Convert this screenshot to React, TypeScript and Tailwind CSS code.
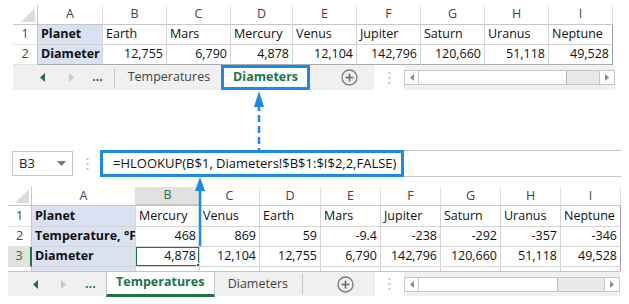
import React from "react";

const BLUE = "#1e88e5";

type CellProps = {
  children?: React.ReactNode;
  className?: string;
};

function Cell({ children, className = "" }: CellProps) {
  return (
    <div className={`flex items-center border-r border-b border-[#d4d4d4] overflow-hidden whitespace-nowrap ${className}`}>
      {children}
    </div>
  );
}

function Corner() {
  return (
    <div className="relative border-r border-b border-[#c6c6c6] bg-white">
      <svg className="absolute right-[2px] bottom-[2px]" width="14" height="14" viewBox="0 0 14 14">
        <polygon points="14,0 14,14 0,14" fill="#dcdcdc" />
      </svg>
    </div>
  );
}

function ColHead({ label, className = "" }: { label: string; className?: string }) {
  return (
    <div className={`flex items-center justify-center border-r border-[#e1e1e1] border-b border-b-[#c6c6c6] text-[#444] ${className}`}>
      {label}
    </div>
  );
}

function RowHead({ label, className = "" }: { label: string; className?: string }) {
  return (
    <div className={`flex items-center justify-center border-r border-[#c6c6c6] border-b border-b-[#e1e1e1] text-[#444] ${className}`}>
      {label}
    </div>
  );
}

function LeftArrow() {
  return (
    <svg width="6" height="9" viewBox="0 0 6 9">
      <polygon points="5,0 5,9 0,4.5" fill="#217346" />
    </svg>
  );
}
function RightArrow() {
  return (
    <svg width="6" height="9" viewBox="0 0 6 9">
      <polygon points="1,0 1,9 6,4.5" fill="#c8c8c8" />
    </svg>
  );
}
function PlusCircle() {
  return (
    <svg width="17" height="17" viewBox="0 0 17 17">
      <circle cx="8.5" cy="8.5" r="7.5" fill="none" stroke="#7a7a7a" strokeWidth="1.3" />
      <line x1="8.5" y1="4.5" x2="8.5" y2="12.5" stroke="#6a6a6a" strokeWidth="1.6" />
      <line x1="4.5" y1="8.5" x2="12.5" y2="8.5" stroke="#6a6a6a" strokeWidth="1.6" />
    </svg>
  );
}
function VDots() {
  return (
    <svg width="3" height="14" viewBox="0 0 3 14">
      <rect x="0.5" y="1" width="2" height="2" fill="#c6c6c6" />
      <rect x="0.5" y="6" width="2" height="2" fill="#c6c6c6" />
      <rect x="0.5" y="11" width="2" height="2" fill="#c6c6c6" />
    </svg>
  );
}

function ScrollBar({ thumbW }: { thumbW: number }) {
  return (
    <div className="flex h-[15px] flex-1 items-stretch border border-[#c6c6c6] bg-[#e9e9e9]">
      <div className="flex w-[14px] items-center justify-center border-r border-[#c6c6c6] bg-white">
        <svg width="4" height="7" viewBox="0 0 4 7">
          <polygon points="4,0 4,7 0,3.5" fill="#8a8a8a" />
        </svg>
      </div>
      <div className="border-r border-[#b8b8b8] bg-white" style={{ width: thumbW }} />
      <div className="flex-1" />
      <div className="flex w-[15px] items-center justify-center border-l border-[#c6c6c6] bg-white">
        <svg width="4" height="7" viewBox="0 0 4 7">
          <polygon points="0,0 0,7 4,3.5" fill="#8a8a8a" />
        </svg>
      </div>
    </div>
  );
}

export default function App() {
  const topPlanets = ["Earth", "Mars", "Mercury", "Venus", "Jupiter", "Saturn", "Uranus", "Neptune"];
  const topDiam = ["12,755", "6,790", "4,878", "12,104", "142,796", "120,660", "51,118", "49,528"];
  const cols = ["B", "C", "D", "E", "F", "G", "H", "I"];

  const botPlanets = ["Mercury", "Venus", "Earth", "Mars", "Jupiter", "Saturn", "Uranus", "Neptune"];
  const botTemp = ["468", "869", "59", "-9.4", "-238", "-292", "-357", "-346"];
  const botDiam = ["4,878", "12,104", "12,755", "6,790", "142,796", "120,660", "51,118", "49,528"];

  return (
    <div
      className="relative h-[304px] w-[629px] overflow-hidden bg-white text-[12.5px] text-[#111]"
      style={{ fontFamily: '"Open Sans", "Noto Sans", sans-serif' }}
    >
      {/* TOP SHEET: Diameters */}
      <div className="ml-[13px] w-[602px] pt-[5px]">
        <div className="grid grid-cols-[25px_65px_64px_64px_62px_64px_64px_64px_64px_64px] grid-rows-[20px_20px_20px] text-[12.5px]">
          <Corner />
          <ColHead label="A" />
          {cols.map((c) => (
            <ColHead key={c} label={c} />
          ))}

          <RowHead label="1" />
          <Cell className="bg-[#d9e1f2] pl-[3px] font-bold">Planet</Cell>
          {topPlanets.map((p, i) => (
            <Cell key={p} className={`pl-[3px] ${i === 7 ? "border-r-[#9f9f9f]" : ""}`}>
              {p}
            </Cell>
          ))}

          <RowHead label="2" />
          <Cell className="bg-[#d9e1f2] pl-[3px] font-bold border-b-[#ababab]">Diameter</Cell>
          {topDiam.map((d, i) => (
            <Cell key={i} className={`justify-end pr-[3px] border-b-[#ababab] ${i === 7 ? "border-r-[#9f9f9f]" : ""}`}>
              {d}
            </Cell>
          ))}
        </div>

        {/* tab bar */}
        <div className="flex h-[25px] items-stretch text-[12.5px]">
          <div className="flex w-[361px] items-center bg-[#f0f0f0]">
            <div className="ml-[27px] flex items-center">
              <LeftArrow />
            </div>
            <div className="ml-[22px] flex items-center">
              <RightArrow />
            </div>
            <div className="ml-[18px] font-bold leading-none text-[#217346]">...</div>
            <div className="ml-[11px] h-[20px] w-px bg-[#c6c6c6]" />
            <div className="ml-[13px] text-[#444]">Temperatures</div>
            <div className="ml-[11px] flex h-[25px] w-[89px] items-center justify-center border-[3px] border-[#1e88e5] bg-white font-bold text-[#217346]">
              Diameters
            </div>
            <div className="ml-[31px] flex items-center">
              <PlusCircle />
            </div>
          </div>
          <div className="flex w-[30px] items-center justify-center">
            <VDots />
          </div>
          <div className="flex flex-1 items-center bg-[#f0f0f0]">
            <ScrollBar thumbW={148} />
          </div>
        </div>
      </div>

      {/* FORMULA BAR */}
      <div className="ml-[12px] mt-[60px] flex h-[27px] items-center">
        <div className="flex h-[25px] w-[61px] items-center justify-between border border-[#c6c6c6] pl-[6px] pr-[6px] text-[13px] text-[#222]">
          <span>B3</span>
          <svg width="9" height="5" viewBox="0 0 9 5">
            <polygon points="0,0 9,0 4.5,5" fill="#777" />
          </svg>
        </div>
        <div className="ml-[13px] flex items-center">
          <VDots />
        </div>
        <div className="ml-[11px] flex h-[27px] flex-1 items-center border-y border-[#c6c6c6]">
          <div className="flex h-[27px] w-[304px] items-center whitespace-nowrap border-[3px] border-[#1e88e5] pl-[10px] text-[13px] text-[#111]">
            =HLOOKUP(B$1, Diameters!$B$1:$I$2,2,FALSE)
          </div>
        </div>
        <div className="w-[8px]" />
      </div>

      {/* BOTTOM SHEET: Temperatures */}
      <div className="ml-[8px] mt-[10px] w-[612px]">
        <div className="grid grid-cols-[24px_104px_64px_60px_61px_60px_60px_60px_60px_60px] grid-rows-[19px_21px_20px_20px_4px] text-[12.5px]">
          <Corner />
          <ColHead label="A" />
          {cols.map((c) => (
            <ColHead
              key={c}
              label={c}
              className={c === "B" ? "bg-[#e1e1e1] text-[#217346] border-b-2 border-b-[#217346]" : ""}
            />
          ))}

          <RowHead label="1" />
          <Cell className="bg-[#d9e1f2] pl-[3px] font-bold">Planet</Cell>
          {botPlanets.map((p, i) => (
            <Cell key={p} className={`pl-[3px] ${i === 7 ? "border-r-[#9f9f9f]" : ""}`}>
              {p}
            </Cell>
          ))}

          <RowHead label="2" />
          <Cell className="bg-[#d9e1f2] pl-[3px] font-bold">Temperature, °F</Cell>
          {botTemp.map((d, i) => (
            <Cell key={i} className={`justify-end pr-[3px] ${i === 7 ? "border-r-[#9f9f9f]" : ""}`}>
              {d}
            </Cell>
          ))}

          <RowHead label="3" className="bg-[#e1e1e1] border-r-2 border-r-[#217346] text-[#217346]" />
          <Cell className="bg-[#d9e1f2] pl-[3px] font-bold">Diameter</Cell>
          {botDiam.map((d, i) => (
            <Cell key={i} className={`relative justify-end pr-[3px] ${i === 7 ? "border-r-[#9f9f9f]" : ""}`}>
              {d}
              {i === 0 && (
                <div className="absolute inset-[-1px] border-2 border-[#217346]">
                  <div className="absolute right-[-4px] bottom-[-4px] h-[6px] w-[6px] border border-white bg-[#217346]" />
                </div>
              )}
            </Cell>
          ))}

          <RowHead label="" className="border-b-0" />
          <div className="border-r border-[#d4d4d4] bg-[#d9e1f2]" />
          {cols.map((c, i) => (
            <div key={c} className={`border-r ${i === 7 ? "border-[#9f9f9f]" : "border-[#d4d4d4]"}`} />
          ))}
        </div>

        {/* tab bar */}
        <div className="flex h-[25px] items-stretch border-t border-[#c6c6c6] text-[12.5px]">
          <div className="flex w-[367px] items-center bg-[#f0f0f0]">
            <div className="ml-[25px] flex items-center">
              <LeftArrow />
            </div>
            <div className="ml-[21px] flex items-center">
              <RightArrow />
            </div>
            <div className="ml-[19px] font-bold leading-none text-[#217346]">...</div>
            <div className="ml-[10px] flex h-[25px] w-[109px] items-center justify-center border-x border-[#c6c6c6] border-b-[3px] border-b-[#217346] bg-white font-bold text-[#217346]">
              Temperatures
            </div>
            <div className="ml-[13px] text-[#444]">Diameters</div>
            <div className="ml-[14px] h-[20px] w-px bg-[#c6c6c6]" />
            <div className="ml-[34px] flex items-center">
              <PlusCircle />
            </div>
          </div>
          <div className="flex w-[29px] items-center justify-center">
            <VDots />
          </div>
          <div className="flex flex-1 items-center bg-[#f0f0f0]">
            <ScrollBar thumbW={139} />
          </div>
        </div>
      </div>

      {/* ANNOTATION ARROWS (overlay) */}
      <svg className="pointer-events-none absolute left-0 top-0" width="629" height="304" viewBox="0 0 629 304">
        <line x1="259" y1="104" x2="259" y2="150" stroke={BLUE} strokeWidth="2.5" strokeDasharray="7 4" />
        <polygon points="259,91 254,107 264,107" fill={BLUE} />
        <line x1="200" y1="186" x2="200" y2="246" stroke={BLUE} strokeWidth="2.5" />
        <polygon points="200,177 195,191 205,191" fill={BLUE} />
      </svg>
    </div>
  );
}
